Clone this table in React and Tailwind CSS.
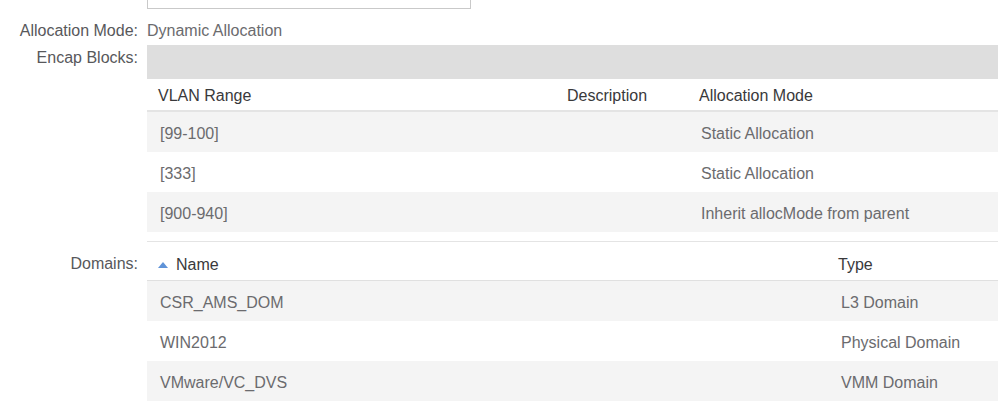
// Encap pool detail — Allocation mode, encap blocks and domains tables.

const ENCAP_BLOCKS = [
  { range: "[99-100]", description: "", mode: "Static Allocation" },
  { range: "[333]", description: "", mode: "Static Allocation" },
  { range: "[900-940]", description: "", mode: "Inherit allocMode from parent" },
];

const DOMAINS = [
  { name: "CSR_AMS_DOM", type: "L3 Domain" },
  { name: "WIN2012", type: "Physical Domain" },
  { name: "VMware/VC_DVS", type: "VMM Domain" },
];

function Label({ children, className = "" }) {
  return (
    <div className={`w-[147px] shrink-0 pr-[9px] text-right leading-6 text-[#58585b] ${className}`}>
      {children}
    </div>
  );
}

function SortUpIcon() {
  return (
    <svg width="10" height="6" viewBox="0 0 10 6" className="shrink-0">
      <path d="M5 0 L10 6 L0 6 Z" fill="#5f93d8" />
    </svg>
  );
}

export default function App() {
  return (
    <div
      className="h-[419px] w-full overflow-hidden bg-white text-[16px] leading-6"
      style={{ fontFamily: '"Liberation Sans", Arial, sans-serif' }}
    >
      {/* Campo de texto cortado arriba */}
      <div className="ml-[147px] h-[9px] w-[324px] border border-t-0 border-[#c9c9c9]" />

      {/* Allocation Mode */}
      <div className="flex pt-[10px] pb-[2px]">
        <Label>Allocation Mode:</Label>
        <div className="text-[#6b6b6e]">Dynamic Allocation</div>
      </div>

      {/* Encap Blocks */}
      <div className="flex">
        <Label className="pt-[1px]">Encap Blocks:</Label>
        <div className="flex-1">
          <div className="h-[34px] bg-[#dedede]" />
          <div className="grid h-[33px] grid-cols-[409px_132px_1fr] items-center border-b-2 border-[#e4e4e4] pt-[3px] text-[#39393b]">
            <div className="pl-[11px]">VLAN Range</div>
            <div className="pl-[11px]">Description</div>
            <div className="pl-[11px]">Allocation Mode</div>
          </div>
          {ENCAP_BLOCKS.map((row, i) => (
            <div
              key={row.range}
              className={`grid h-[40px] grid-cols-[409px_132px_1fr] items-center pt-[4px] text-[#6b6b6e] ${
                i % 2 === 0 ? "bg-[#f4f4f4]" : "bg-white"
              }`}
            >
              <div className="pl-[13px]">{row.range}</div>
              <div className="pl-[13px]">{row.description}</div>
              <div className="pl-[13px]">{row.mode}</div>
            </div>
          ))}
        </div>
      </div>

      {/* Domains */}
      <div className="mt-[9px] flex">
        <Label className="pt-[11px]">Domains:</Label>
        <div className="flex-1 border-t border-[#e4e4e4]">
          <div className="grid h-[39px] grid-cols-[680px_1fr] items-center border-b border-[#e0e0e0] pt-[8px] text-[#39393b]">
            <div className="flex items-center gap-2 pl-[11px]">
              <SortUpIcon />
              <span>Name</span>
            </div>
            <div className="pl-[11px]">Type</div>
          </div>
          {DOMAINS.map((row, i) => (
            <div
              key={row.name}
              className={`grid h-[40px] grid-cols-[680px_1fr] items-center pt-[4px] text-[#6b6b6e] ${
                i % 2 === 0 ? "bg-[#f4f4f4]" : "bg-white"
              }`}
            >
              <div className="pl-[13px]">{row.name}</div>
              <div className="pl-[14px]">{row.type}</div>
            </div>
          ))}
        </div>
      </div>
    </div>
  );
}
